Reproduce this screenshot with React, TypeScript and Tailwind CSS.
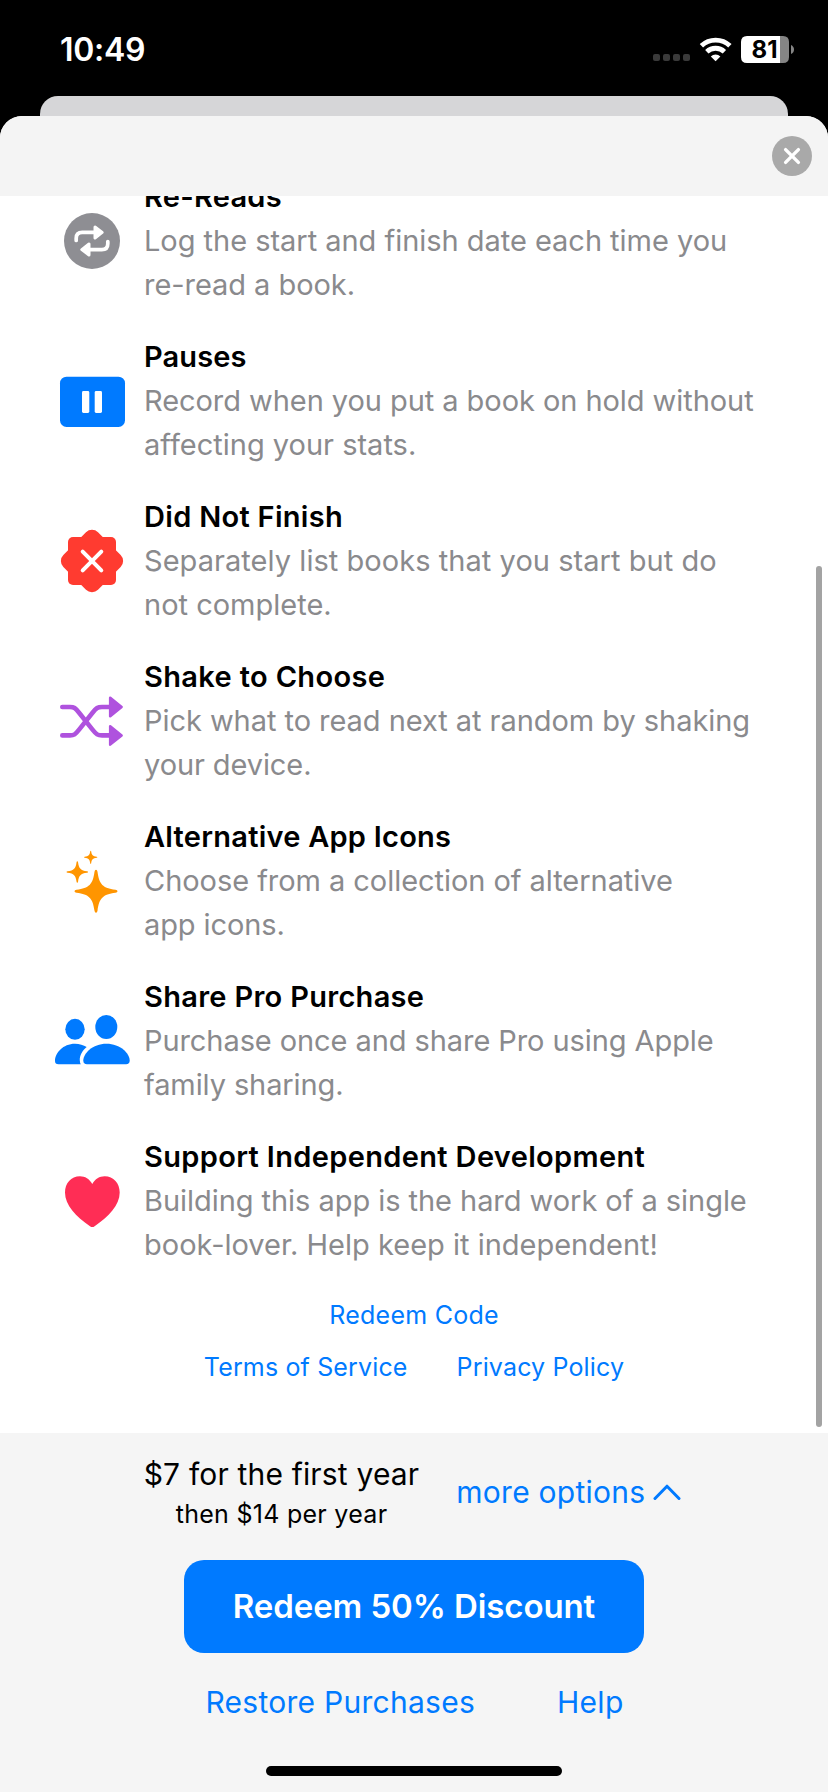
import type { ReactNode } from 'react';

interface Line {
  text: string;
  tracking?: string;
}

interface Feature {
  title: Line;
  body: Line[];
  icon: ReactNode;
}

const SPARKLE =
  'M0 -21.5 Q1.2 -21.5 1.5 -19.5 C3.2 -6.8 6.8 -3.2 19.5 -1.5 Q21.5 -1.2 21.5 0 Q21.5 1.2 19.5 1.5 C6.8 3.2 3.2 6.8 1.5 19.5 Q1.2 21.5 0 21.5 Q-1.2 21.5 -1.5 19.5 C-3.2 6.8 -6.8 3.2 -19.5 1.5 Q-21.5 1.2 -21.5 0 Q-21.5 -1.2 -19.5 -1.5 C-6.8 -3.2 -3.2 -6.8 -1.5 -19.5 Q-1.2 -21.5 0 -21.5Z';

function RepeatArrow() {
  return (
    <>
      <path d="M26.2 41.5 V39.3 Q26.2 33.4 32.2 33.4 H45" fill="none" stroke="#fff" strokeWidth={3.7} strokeLinecap="round" />
      <path d="M45 28 L52.2 33.4 L45 39Z" fill="#fff" stroke="#fff" strokeWidth={3} strokeLinejoin="round" />
    </>
  );
}

const features: Feature[] = [
  {
    title: { text: 'Re-Reads', tracking: 'tracking-[0.25px]' },
    body: [
      { text: 'Log the start and finish date each time you', tracking: 'tracking-[-0.03px]' },
      { text: 're-read a book.', tracking: 'tracking-[-0.05px]' },
    ],
    icon: (
      <>
        <circle cx={42} cy={42} r={28} fill="#8e8e93" />
        <RepeatArrow />
        <g transform="rotate(180 42 42)">
          <RepeatArrow />
        </g>
      </>
    ),
  },
  {
    title: { text: 'Pauses', tracking: 'tracking-[0.1px]' },
    body: [
      { text: 'Record when you put a book on hold without', tracking: 'tracking-[-0.06px]' },
      { text: 'affecting your stats.' },
    ],
    icon: (
      <>
        <rect x={10} y={17.7} width={65} height={50.3} rx={6.5} fill="#007aff" />
        <rect x={32} y={32} width={7.3} height={22} rx={1.4} fill="#fff" />
        <rect x={44.7} y={32} width={7.3} height={22} rx={1.4} fill="#fff" />
      </>
    ),
  },
  {
    title: { text: 'Did Not Finish', tracking: 'tracking-[0.3px]' },
    body: [
      { text: 'Separately list books that you start but do', tracking: 'tracking-[0.05px]' },
      { text: 'not complete.' },
    ],
    icon: (
      <>
        <rect x={18} y={18} width={48} height={48} rx={5} fill="#ff3b30" />
        <rect x={17.5} y={17.5} width={49} height={49} rx={8.5} fill="#ff3b30" transform="rotate(45 42 42)" />
        <path d="M32.7 32.7 L51.3 51.3 M51.3 32.7 L32.7 51.3" stroke="#fff" strokeWidth={4} strokeLinecap="round" />
      </>
    ),
  },
  {
    title: { text: 'Shake to Choose', tracking: 'tracking-[0.35px]' },
    body: [
      { text: 'Pick what to read next at random by shaking', tracking: 'tracking-[-0.05px]' },
      { text: 'your device.', tracking: 'tracking-[-0.1px]' },
    ],
    icon: (
      <>
        <g fill="none" stroke="#af52de" strokeWidth={4.6} strokeLinecap="round">
          <path d="M12.3 28 H20 C24 28 25.2 28.8 29.3 34 L42.3 50.4 C46.4 55.6 47.8 56.4 52 56.4 H60" />
          <path d="M12.3 56.4 H20 C24 56.4 25.2 55.6 29.3 50.4 L42.3 34 C46.4 28.8 47.8 28 52 28 H60" />
        </g>
        <g fill="#af52de" stroke="#af52de" strokeWidth={2.6} strokeLinejoin="round">
          <path d="M60.2 18.8 L71.6 28 L60.2 37.2Z" />
          <path d="M60.2 47.2 L71.6 56.4 L60.2 65.6Z" />
        </g>
      </>
    ),
  },
  {
    title: { text: 'Alternative App Icons', tracking: 'tracking-[0.25px]' },
    body: [
      { text: 'Choose from a collection of alternative', tracking: 'tracking-[-0.05px]' },
      { text: 'app icons.', tracking: 'tracking-[-0.1px]' },
    ],
    icon: (
      <g fill="#ff9500">
        <path d={SPARKLE} transform="translate(46 52.3)" />
        <path d={SPARKLE} transform="translate(27.3 33) scale(0.5)" />
        <path d={SPARKLE} transform="translate(40.7 18.3) scale(0.31)" />
      </g>
    ),
  },
  {
    title: { text: 'Share Pro Purchase', tracking: 'tracking-[0.3px]' },
    body: [
      { text: 'Purchase once and share Pro using Apple', tracking: 'tracking-[-0.08px]' },
      { text: 'family sharing.', tracking: 'tracking-[-0.1px]' },
    ],
    icon: (
      <g fill="#007aff">
        <ellipse cx={25} cy={30.3} rx={9.7} ry={10.5} />
        <ellipse cx={56.3} cy={28} rx={11} ry={12} />
        <path d="M8.5 65.3 Q5 65.3 5 62 C5 54 13 44.7 25 44.7 C29.5 44.7 33.5 46 36.7 48 C32 51.8 29.5 57 29.8 61.5 Q29.9 63.8 30.8 65.3Z" />
        <path d="M37 65.3 Q33.3 65.3 33.3 61.5 C33.3 54.5 42.5 44.7 56.4 44.7 C70.5 44.7 79.7 54.5 79.7 61.5 Q79.7 65.3 76 65.3Z" />
      </g>
    ),
  },
  {
    title: { text: 'Support Independent Development', tracking: 'tracking-[0.35px]' },
    body: [
      { text: 'Building this app is the hard work of a single', tracking: 'tracking-[-0.05px]' },
      { text: 'book-lover. Help keep it independent!' },
    ],
    icon: (
      <path
        d="M42.3 25 C39.5 20 35 17.3 30 17.3 C21 17.3 15 24.5 15 33.5 C15 46 26 58 40 67.2 Q42.3 68.9 44.6 67.2 C58.6 58 69.7 46 69.7 33.5 C69.7 24.5 63.6 17.3 54.6 17.3 C49.6 17.3 45 20 42.3 25Z"
        fill="#ff2d55"
      />
    ),
  },
];

function StatusBar() {
  return (
    <div className="flex h-24 shrink-0 items-start pt-[30px] pl-[60px] pr-[34px] text-white">
      <span className="text-[32px] leading-10 font-semibold tracking-[-0.3px]">10:49</span>
      <svg className="mt-1.5 ml-auto" width={142} height={28} viewBox="652 36 142 28">
        <g fill="#3a3a3a">
          <rect x={653} y={54} width={7} height={7} rx={2} />
          <rect x={663} y={54} width={7} height={7} rx={2} />
          <rect x={673} y={54} width={7} height={7} rx={2} />
          <rect x={683} y={54} width={7} height={7} rx={2} />
        </g>
        <g fill="none" stroke="#fff" strokeWidth={4.8}>
          <path d="M701.4 45.8 A20.5 20.5 0 0 1 729.9 45.8" />
          <path d="M706.8 51.8 A12.7 12.7 0 0 1 724.4 51.8" />
        </g>
        <path d="M715.6 61.3 L710.8 56.4 A7 7 0 0 1 720.4 56.4Z" fill="#fff" />
        <path d="M780 36 H783 Q789 36 789 42 V57 Q789 63 783 63 H780Z" fill="#858585" />
        <path d="M780 36 H747 Q741 36 741 42 V57 Q741 63 747 63 H780Z" fill="#fff" />
        <path d="M791 45 Q794 46.5 794 49.5 Q794 52.5 791 54Z" fill="#858585" />
        <text x={764.5} y={58} textAnchor="middle" fontSize={24} fontWeight={700} fill="#000">
          81
        </text>
      </svg>
    </div>
  );
}

function FeatureRow({ title, body, icon }: Feature) {
  return (
    <div className="flex h-[132px] items-center pl-[50px]">
      <svg className="mr-2.5 shrink-0" width={84} height={84} viewBox="0 0 84 84">
        {icon}
      </svg>
      <div className="text-[29px] leading-[44px] whitespace-nowrap">
        <h2 className={`font-semibold text-black ${title.tracking ?? ''}`}>{title.text}</h2>
        {body.map((line) => (
          <p key={line.text} className={`text-[#8a8a8d] ${line.tracking ?? ''}`}>
            {line.text}
          </p>
        ))}
      </div>
    </div>
  );
}

export default function App() {
  return (
    <div className="flex h-[1792px] w-[828px] flex-col overflow-hidden bg-black font-['Inter','Liberation_Sans',sans-serif]">
      <StatusBar />
      <div className="mx-10 h-5 shrink-0 rounded-t-[18px] bg-[#d6d6d8]" />

      <div className="relative flex min-h-0 flex-1 flex-col overflow-hidden rounded-t-[22px] bg-white">
        <header className="flex h-20 shrink-0 items-center justify-end bg-[#f4f4f4] pr-4">
          <button aria-label="Close" className="flex size-10 items-center justify-center rounded-full bg-[#a9a9a9]">
            <svg width={18} height={18} viewBox="0 0 18 18">
              <path d="M2.6 2.6 L15.4 15.4 M15.4 2.6 L2.6 15.4" stroke="#fff" strokeWidth={3.4} strokeLinecap="round" />
            </svg>
          </button>
        </header>

        {/* Scrolled list: the first title is partly under the header */}
        <main className="h-[1237px] shrink-0 overflow-hidden">
          <div className="-mt-[21px] flex flex-col gap-7">
            {features.map((feature) => (
              <FeatureRow key={feature.title.text} {...feature} />
            ))}
          </div>
          <div className="mt-[22px] text-[25px] leading-[52px] tracking-[0.15px] whitespace-nowrap text-[#007aff]">
            <div className="flex justify-center">
              <button className="tracking-[0.25px]">Redeem Code</button>
            </div>
            <div className="flex justify-center gap-[49px]">
              <button>Terms of Service</button>
              <button>Privacy Policy</button>
            </div>
          </div>
        </main>
        <div className="absolute top-[450px] right-1.5 h-[861px] w-1.5 rounded-full bg-[#a3a3a3]" />

        <footer className="flex flex-1 flex-col items-center bg-[#f5f5f5] pt-5 whitespace-nowrap">
          <div className="mr-[3px] flex items-center gap-[37px]">
            <div className="text-center">
              <p className="text-[30px] leading-[42px] tracking-[0.17px]">$7 for the first year</p>
              <p className="text-[25px] leading-[38px] tracking-[0.28px]">then $14 per year</p>
            </div>
            <button className="mb-0.5 flex items-center gap-2 text-[30px] tracking-[0.25px] text-[#007aff]">
              more options
              <svg width={28} height={18} viewBox="0 0 28 18">
                <path d="M2 15.5 L14 3.2 L26 15.5" fill="none" stroke="#007aff" strokeWidth={3} strokeLinecap="round" strokeLinejoin="round" />
              </svg>
            </button>
          </div>
          <button className="mt-[27px] h-[93px] w-[460px] rounded-[20px] bg-[#007aff] text-[33px] font-semibold tracking-[-0.1px] text-white">
            Redeem 50% Discount
          </button>
          <div className="mt-[25px] ml-px flex gap-[82px] text-[30px] leading-[48px] tracking-[0.27px] text-[#007aff]">
            <button>Restore Purchases</button>
            <button>Help</button>
          </div>
          <div className="mt-auto mb-4 h-2.5 w-[296px] rounded-full bg-black" />
        </footer>
      </div>
    </div>
  );
}
